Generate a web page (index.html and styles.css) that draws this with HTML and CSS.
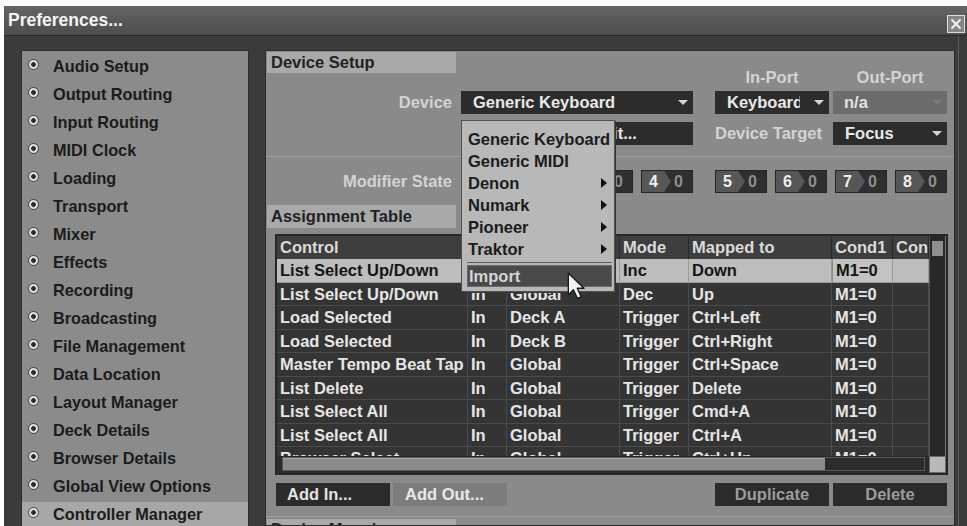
FILE: index.html
```html
<!DOCTYPE html>
<html>
<head>
<meta charset="utf-8">
<title>Preferences</title>
<link rel="stylesheet" href="styles.css">
</head>
<body>
<div class="window">
  <div class="titlebar">
    <span class="title">Preferences...</span>
    <span class="close">
      <svg width="18" height="18" viewBox="0 0 18 18"><rect x="0.5" y="0.5" width="17" height="17" fill="#858585" stroke="#dcdcdc"/><path d="M4.5 4.5 L13.5 13.5 M13.5 4.5 L4.5 13.5" stroke="#f2f2f2" stroke-width="2"/></svg>
    </span>
  </div>
  <div class="content">
    <ul class="sidebar">
      <li class="item"><span class="radio"></span>Audio Setup</li>
      <li class="item"><span class="radio"></span>Output Routing</li>
      <li class="item"><span class="radio"></span>Input Routing</li>
      <li class="item"><span class="radio"></span>MIDI Clock</li>
      <li class="item"><span class="radio"></span>Loading</li>
      <li class="item"><span class="radio"></span>Transport</li>
      <li class="item"><span class="radio"></span>Mixer</li>
      <li class="item"><span class="radio"></span>Effects</li>
      <li class="item"><span class="radio"></span>Recording</li>
      <li class="item"><span class="radio"></span>Broadcasting</li>
      <li class="item"><span class="radio"></span>File Management</li>
      <li class="item"><span class="radio"></span>Data Location</li>
      <li class="item"><span class="radio"></span>Layout Manager</li>
      <li class="item"><span class="radio"></span>Deck Details</li>
      <li class="item"><span class="radio"></span>Browser Details</li>
      <li class="item"><span class="radio"></span>Global View Options</li>
      <li class="item active"><span class="radio"></span>Controller Manager</li>
    </ul>

    <div class="panel">
      <div class="tabrow"><span class="tab">Device Setup</span></div>

      <div class="setup">
        <span class="hlbl c5">In-Port</span>
        <span class="hlbl c6">Out-Port</span>

        <span class="lbl r2 c1">Device</span>
        <div class="dd r2 c23"><span>Generic Keyboard</span><i class="down"></i></div>
        <div class="dd r2 c5"><span class="clip">Keyboard</span><i class="down"></i></div>
        <div class="dd off r2 c6"><span>n/a</span><i class="down dim"></i></div>

        <div class="dd r3 c2"><span>Add...</span></div>
        <div class="dd r3 c3"><span>Edit...</span></div>
        <span class="lbl left r3 c5">Device Target</span>
        <div class="dd r3 c6"><span>Focus</span><i class="down"></i></div>
      </div>

      <div class="sep"></div>

      <div class="modrow">
        <span class="lbl c1">Modifier State</span>
        <div class="mods c23">
          <span class="mod"><b>1</b><em>0</em></span>
          <span class="mod"><b>2</b><em>0</em></span>
          <span class="mod"><b>3</b><em>0</em></span>
          <span class="mod"><b>4</b><em>0</em></span>
        </div>
        <div class="mods c56">
          <span class="mod"><b>5</b><em>0</em></span>
          <span class="mod"><b>6</b><em>0</em></span>
          <span class="mod"><b>7</b><em>0</em></span>
          <span class="mod"><b>8</b><em>0</em></span>
        </div>
      </div>

      <div class="tabrow second"><span class="tab tall">Assignment Table</span></div>

      <div class="atable">
        <div class="tgrid">
          <div class="trow thead"><span>Control</span><span>I/O</span><span>Assignment</span><span>Mode</span><span>Mapped to</span><span>Cond1</span><span>Cond2</span></div>
          <div class="tbody">
            <div class="trow sel"><span>List Select Up/Down</span><span>In</span><span>Global</span><span>Inc</span><span>Down</span><span class="box">M1=0</span><span></span></div>
            <div class="trow"><span>List Select Up/Down</span><span>In</span><span>Global</span><span>Dec</span><span>Up</span><span>M1=0</span><span></span></div>
            <div class="trow"><span>Load Selected</span><span>In</span><span>Deck A</span><span>Trigger</span><span>Ctrl+Left</span><span>M1=0</span><span></span></div>
            <div class="trow"><span>Load Selected</span><span>In</span><span>Deck B</span><span>Trigger</span><span>Ctrl+Right</span><span>M1=0</span><span></span></div>
            <div class="trow"><span>Master Tempo Beat Tap</span><span>In</span><span>Global</span><span>Trigger</span><span>Ctrl+Space</span><span>M1=0</span><span></span></div>
            <div class="trow"><span>List Delete</span><span>In</span><span>Global</span><span>Trigger</span><span>Delete</span><span>M1=0</span><span></span></div>
            <div class="trow"><span>List Select All</span><span>In</span><span>Global</span><span>Trigger</span><span>Cmd+A</span><span>M1=0</span><span></span></div>
            <div class="trow"><span>List Select All</span><span>In</span><span>Global</span><span>Trigger</span><span>Ctrl+A</span><span>M1=0</span><span></span></div>
            <div class="trow"><span>Browser Select</span><span>In</span><span>Global</span><span>Trigger</span><span>Ctrl+Up</span><span>M1=0</span><span></span></div>
          </div>
        </div>
        <div class="vscroll"><div class="vthumb"></div></div>
        <div class="hscroll"><div class="htrack"><div class="hthumb"></div></div></div>
        <div class="corner"></div>
      </div>

      <div class="btns">
        <span class="btn">Add In...</span>
        <span class="btn light">Add Out...</span>
        <span class="btn dim push">Duplicate</span>
        <span class="btn dim">Delete</span>
      </div>

      <div class="sep low"></div>
      <div class="tabrow third"><span class="tab">Device Mapping</span></div>

      <div class="menu">
        <div class="mi"><span>Generic Keyboard</span></div>
        <div class="mi"><span>Generic MIDI</span></div>
        <div class="mi"><span>Denon</span><i class="arr"></i></div>
        <div class="mi"><span>Numark</span><i class="arr"></i></div>
        <div class="mi"><span>Pioneer</span><i class="arr"></i></div>
        <div class="mi"><span>Traktor</span><i class="arr"></i></div>
        <div class="msep"></div>
        <div class="mi hl"><span>Import</span></div>
      </div>

      <svg class="cursor" width="20" height="28" viewBox="0 0 15 21">
        <path d="M1 1 L1 17 L4.8 13.3 L7.8 19.8 L10.6 18.6 L7.7 12.2 L12.8 12.2 Z" fill="#f4f4f4" stroke="#1a1a1a" stroke-width="1" stroke-linejoin="round"/>
      </svg>
    </div>
  </div>
</div>
</body>
</html>
```

FILE: styles.css
```css
* { box-sizing: border-box; }
html, body { margin: 0; padding: 0; }
body {
  background: #ffffff;
  width: 967px;
  height: 526px;
  overflow: hidden;
  font-family: "Liberation Sans", Arial, sans-serif;
  font-weight: bold;
}

.window {
  margin: 6px 0 0 4px;
  width: 963px;
  height: 520px;
  background: #3b3b3b;
  display: flex;
  flex-direction: column;
  overflow: hidden;
}

.titlebar {
  height: 30px;
  flex: none;
  background: linear-gradient(#646464, #4d4d4d);
  border-bottom: 1px solid #262626;
  display: flex;
  align-items: center;
  justify-content: space-between;
  padding: 0 2px 0 4px;
}
.title { color: #f4f4f4; font-size: 17.5px; }
.close { display: block; width: 18px; height: 18px; margin-top: 6px; }
.close svg { display: block; }

.content {
  flex: 1;
  min-height: 0;
  display: flex;
  gap: 16px;
  padding: 14px 12px 0 17px;
  background: linear-gradient(to left, #3b3b3b 0 8px, #5c5c5c 8px 9px, #3b3b3b 9px 100%);
}

/* sidebar */
.sidebar {
  width: 228px;
  flex: none;
  margin: 0;
  padding: 3px 0 0;
  list-style: none;
  background: #8b8b8b;
  border: 1px solid #2c2c2c;
  display: flex;
  flex-direction: column;
  gap: 4px;
}
.item {
  height: 24px;
  flex: none;
  display: flex;
  align-items: center;
  padding-left: 6px;
  color: #1b1b1b;
  font-size: 16.3px;
}
.item.active { background: #a7a7a7; }
.radio {
  width: 11px;
  height: 11px;
  flex: none;
  margin: 0 14px 4px 0;
  border-radius: 50%;
  border: 1.5px solid #444;
  background: radial-gradient(circle, #2b2b2b 0 2px, #dedede 2.6px 100%);
}

/* right panel */
.panel {
  width: 690px;
  flex: none;
  position: relative;
  background: #8a8a8a;
  border: 1px solid #2c2c2c;
  padding-top: 1px;
  overflow: hidden;
}
.tabrow { height: 21px; padding-left: 1px; }
.tabrow.second { height: 23px; margin-top: 12px; }
.tabrow.third { margin-top: 2px; }
.tab {
  display: block;
  width: 189px;
  height: 100%;
  background: #a9a9a9;
  color: #222;
  font-size: 16.5px;
  line-height: 21px;
  padding-left: 4px;
}
.tab.tall { line-height: 23px; }

.setup, .modrow {
  display: grid;
  grid-template-columns: 191px 115px 113px 14px 114px 114px;
  column-gap: 4px;
}
.setup {
  grid-template-rows: 18px 28px 31px;
  margin-top: -5px;
}
.modrow { margin-top: 13px; height: 23px; }

.c1 { grid-column: 1; }
.c2 { grid-column: 2; }
.c3 { grid-column: 3; }
.c5 { grid-column: 5; }
.c6 { grid-column: 6; }
.c23 { grid-column: 2 / 4; }
.c56 { grid-column: 5 / 7; }
.r2 { grid-row: 2; }
.r3 { grid-row: 3; }

.hlbl {
  grid-row: 1;
  color: #d3d3d3;
  font-size: 16.5px;
  line-height: 18px;
  text-align: center;
}
.lbl {
  color: #d3d3d3;
  font-size: 16.5px;
  line-height: 23px;
  text-align: right;
  padding-right: 5px;
  align-self: end;
  white-space: nowrap;
}
.lbl.left { text-align: left; padding: 0; }

.dd {
  height: 23px;
  align-self: end;
  background: #2c2c2c;
  color: #e8e8e8;
  font-size: 16.5px;
  display: flex;
  align-items: center;
  justify-content: space-between;
  padding: 0 5px 0 12px;
  white-space: nowrap;
}
.dd.off { background: #6c6c6c; padding-left: 11px; color: #e2e2e2; }
.clip { display: block; width: 73px; overflow: hidden; }
.down {
  width: 0; height: 0;
  border-left: 5px solid transparent;
  border-right: 5px solid transparent;
  border-top: 5px solid #d4d4d4;
}
.down.dim { border-top-color: #7a7a7a; }

.sep { height: 1px; background: #a0a0a0; margin-top: 11px; }
.sep.low { margin-top: 10px; }

.mods { display: flex; justify-content: space-between; }
.mod {
  width: 52px;
  height: 23px;
  display: flex;
  background: #2f2f2f;
  border: 1px solid #242424;
  font-size: 16px;
  line-height: 21px;
}
.mod b {
  width: 29px;
  padding-left: 7px;
  background: #575757;
  color: #efefef;
  clip-path: polygon(0 0, 76% 0, 100% 50%, 76% 100%, 0 100%);
}
.mod em { font-style: normal; color: #8e8e8e; padding-left: 3px; }

/* assignment table */
.atable {
  display: grid;
  grid-template-columns: 652px 17px;
  grid-template-rows: 220px 17px;
  width: 673px;
  margin: 6px 0 0 9px;
  border: 2px solid #262626;
  background: #2f2f2f;
}
.tgrid { overflow: hidden; }
.tbody { height: 197px; overflow: hidden; }
.trow {
  display: grid;
  grid-template-columns: 191px 39px 113px 69px 143px 61px 36px;
  height: 23.5px;
  font-size: 16.5px;
  color: #e6e6e6;
  background: #343434;
}
.trow > span {
  padding-left: 3px;
  border-right: 1px solid #4b4b4b;
  border-bottom: 1px solid #4b4b4b;
  white-space: nowrap;
  overflow: hidden;
  line-height: 22.5px;
}
.trow.thead { height: 23px; background: #3e3e3e; color: #dadada; }
.trow.thead > span { border-bottom: none; border-right-color: #2a2a2a; line-height: 23px; }
.trow.sel { background: #bdbdbd; color: #151515; }
.trow.sel > span { border-color: #9a9a9a; }
.trow.sel > span.box { background: #c3c3c3; border-left: 1px solid #8a8a8a; }

.vscroll {
  background: #282828;
  border-left: 1px solid #555;
  border-right: 1px solid #767676;
  padding: 5px 2px 0;
}
.vthumb { height: 15px; background: #8e8e8e; }
.hscroll { background: #2a2a2a; padding: 1px 4px 2px 5px; }
.htrack { height: 14px; border: 1px solid #5a5a5a; background: #2b2b2b; }
.hthumb { width: 542px; height: 12px; background: #8a8a8a; border-top: 1px solid #a8a8a8; }
.corner { background: #b9b9b9; border: 1px solid #6a6a6a; }

/* buttons */
.btns { display: flex; margin-top: 8px; padding: 0 7px 0 10px; }
.btn {
  width: 114px;
  height: 23px;
  font-size: 16.5px;
  line-height: 23px;
  padding-left: 11px;
  background: #2b2b2b;
  color: #e3e3e3;
  white-space: nowrap;
}
.btn.light { background: #7c7c7c; color: #e8e8e8; margin-left: 3px; padding-left: 12px; }
.btn.dim { color: #9c9c9c; text-align: center; padding-left: 0; margin-left: 4px; }
.btn.push { margin-left: auto; }

/* dropdown menu */
.menu {
  position: absolute;
  left: 195px;
  top: 69px;
  width: 154px;
  background: #b8b8b8;
  border: 1px solid #505050;
  box-shadow: 1px 1px 0 #363636;
  padding: 7px 2px 4px 5px;
  font-size: 16.5px;
  color: #1c1c1c;
}
.mi {
  height: 22px;
  line-height: 22px;
  display: flex;
  align-items: center;
  justify-content: space-between;
  padding: 0 5px 0 1px;
  white-space: nowrap;
}
.arr {
  width: 0; height: 0;
  border-top: 5px solid transparent;
  border-bottom: 5px solid transparent;
  border-left: 6px solid #111;
}
.msep { height: 1px; background: #5e5e5e; margin: 2px 0; }
.mi.hl { background: #4a4a4a; color: #d4d4d4; border: 1px solid #6c6c6c; line-height: 20px; }

.cursor { position: absolute; left: 301px; top: 221px; }
```
